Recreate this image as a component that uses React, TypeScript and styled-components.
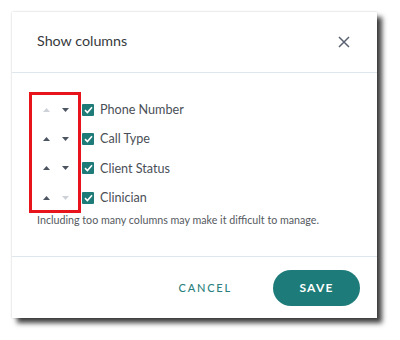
import React, { useState } from 'react';
import styled, { createGlobalStyle } from 'styled-components';

const GlobalStyle = createGlobalStyle`
    html, body {
        margin: 0;
        padding: 0;
        background: #ffffff;
        font-family: Lato, "Open Sans", Arial, sans-serif;
    }
`;

const Page = styled.div`
    padding: 12px 23px 0 12px;
    width: 400px;
    height: 340px;
    box-sizing: border-box;
`;

const Dialog = styled.div`
    position: relative;
    width: 365px;
    height: 306px;
    background: #ffffff;
    display: flex;
    flex-direction: column;
    box-shadow: 0 0 2px rgba(0, 0, 0, 0.2), 5px 5px 5px rgba(0, 0, 0, 0.75);
`;

const Header = styled.div`
    height: 60px;
    display: flex;
    align-items: center;
    justify-content: space-between;
    padding: 0 26px 0 25px;
    border-bottom: 1px solid #dfe6ee;
`;

const Title = styled.h2`
    margin: 0 0 3px;
    font-size: 14.3px;
    font-weight: 400;
    color: #363a40;
`;

const CloseButton = styled.button`
    border: none;
    background: none;
    padding: 0;
    width: 14px;
    height: 14px;
    display: flex;
    align-items: center;
    justify-content: center;
    cursor: pointer;
`;

const Body = styled.div`
    flex: 1;
    padding: 22px 25px 0;
    border-bottom: 1px solid #dfe6ee;
`;

const Row = styled.div`
    height: 29.3px;
    display: flex;
    align-items: center;
`;

const Arrow = styled.button<{ $disabled?: boolean }>`
    border: none;
    background: none;
    padding: 0;
    width: 19px;
    height: 20px;
    display: flex;
    align-items: center;
    justify-content: center;
    color: ${(p) => (p.$disabled ? '#cdd2d8' : '#4c5462')};
    cursor: ${(p) => (p.$disabled ? 'default' : 'pointer')};
`;

const Check = styled.span`
    width: 12px;
    height: 12px;
    margin-left: 7px;
    border-radius: 1px;
    background: #1e7b78;
    display: flex;
    align-items: center;
    justify-content: center;
`;

const Label = styled.span`
    margin-left: 6px;
    font-size: 12.6px;
    color: #4a4f57;
`;

const Hint = styled.p`
    margin: 0;
    font-size: 10.7px;
    line-height: 16px;
    color: #555a61;
`;

const Highlight = styled.div`
    position: absolute;
    left: 17px;
    top: 80px;
    width: 46px;
    height: 115px;
    border: 3px solid #e8141c;
    pointer-events: none;
`;

const Footer = styled.div`
    height: 61px;
    display: flex;
    align-items: center;
    justify-content: flex-end;
    padding-right: 17px;
    gap: 41px;
`;

const CancelButton = styled.button`
    border: none;
    background: none;
    padding: 0;
    font-family: inherit;
    font-size: 11px;
    font-weight: 500;
    letter-spacing: 1.8px;
    color: #2a7f7c;
    cursor: pointer;
`;

const SaveButton = styled.button`
    border: none;
    width: 87px;
    height: 36px;
    border-radius: 18px;
    background: #1d7b79;
    color: #ffffff;
    font-family: inherit;
    font-size: 12px;
    font-weight: 700;
    letter-spacing: 1.2px;
    cursor: pointer;
`;

const Up = () => (
    <svg width="7" height="4" viewBox="0 0 7 4">
        <path d="M3.5 0 L7 4 L0 4 Z" fill="currentColor" />
    </svg>
);

const Down = () => (
    <svg width="7" height="4" viewBox="0 0 7 4">
        <path d="M0 0 L7 0 L3.5 4 Z" fill="currentColor" />
    </svg>
);

const columns = ['Phone Number', 'Call Type', 'Client Status', 'Clinician'];

export default function App() {
    const [items] = useState(columns);

    return (
        <>
            <GlobalStyle />
            <Page>
                <Dialog>
                    <Header>
                        <Title>Show columns</Title>
                        <CloseButton aria-label="Close">
                            <svg width="12" height="12" viewBox="0 0 12 12">
                                <path d="M1 1 L11 11 M11 1 L1 11" stroke="#5b6272" strokeWidth="1.5" />
                            </svg>
                        </CloseButton>
                    </Header>
                    <Body>
                        {items.map((name, i) => (
                            <Row key={name}>
                                <Arrow $disabled={i === 0}>
                                    <Up />
                                </Arrow>
                                <Arrow $disabled={i === items.length - 1}>
                                    <Down />
                                </Arrow>
                                <Check>
                                    <svg width="9" height="8" viewBox="0 0 9 8">
                                        <path d="M1 4.2 L3.4 6.5 L8 1.2" stroke="#fff" strokeWidth="1.6" fill="none" />
                                    </svg>
                                </Check>
                                <Label>{name}</Label>
                            </Row>
                        ))}
                        <Hint>Including too many columns may make it difficult to manage.</Hint>
                    </Body>
                    <Footer>
                        <CancelButton>CANCEL</CancelButton>
                        <SaveButton>SAVE</SaveButton>
                    </Footer>
                    <Highlight />
                </Dialog>
            </Page>
        </>
    );
}
